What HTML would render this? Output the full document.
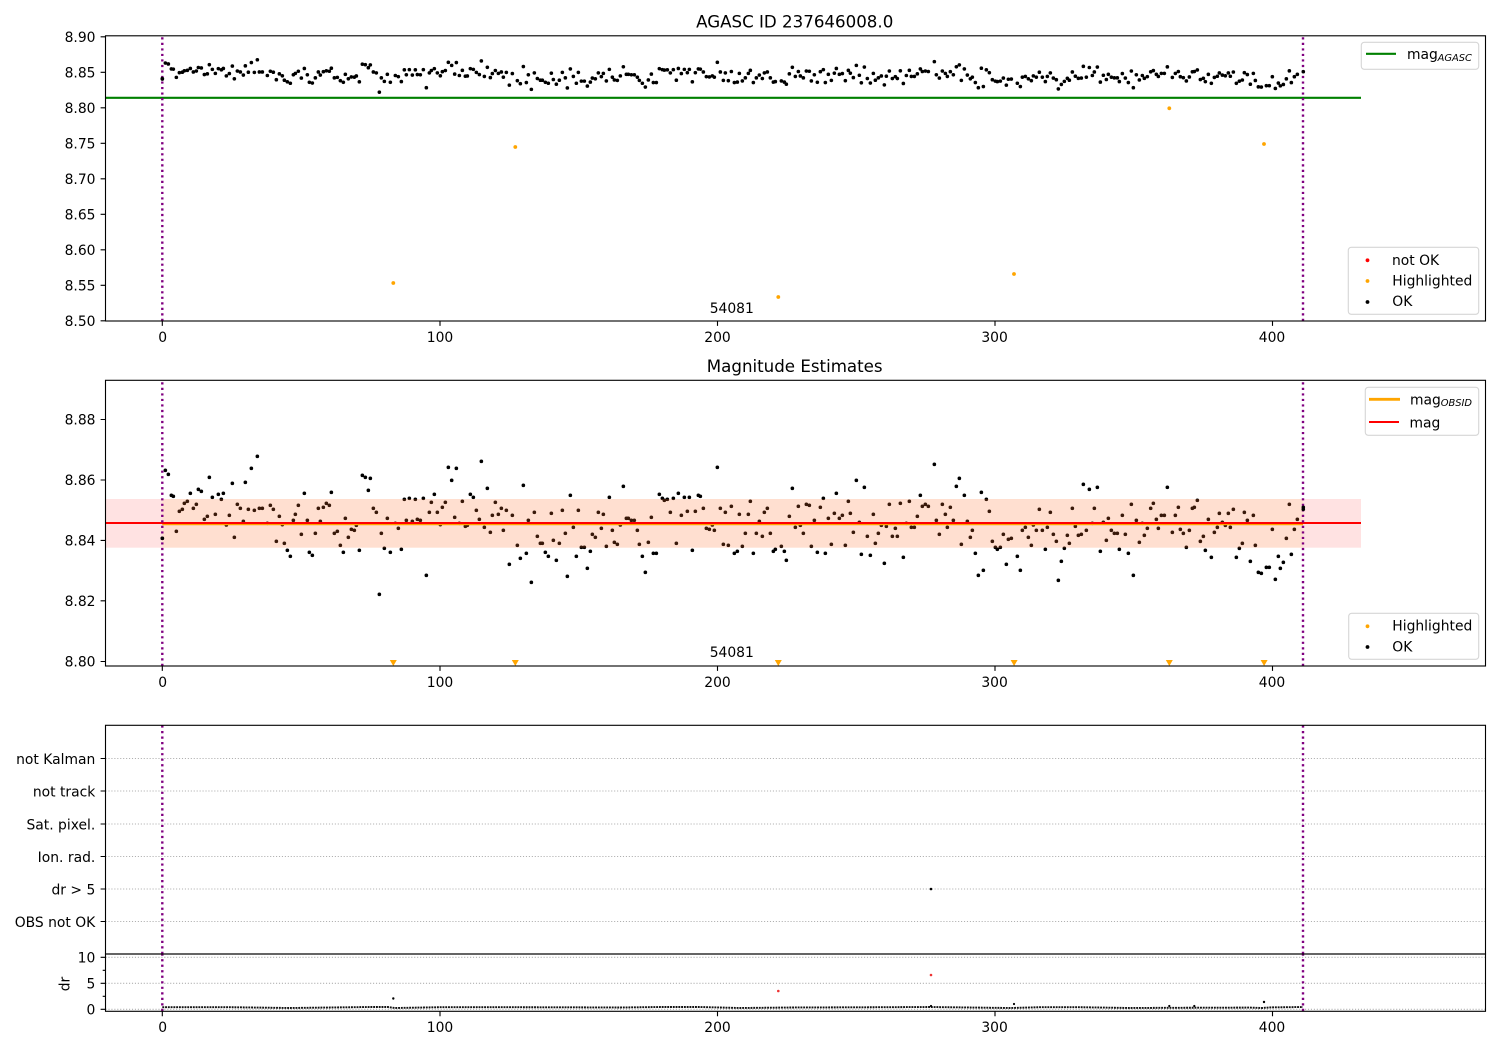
<!DOCTYPE html>
<html><head><meta charset="utf-8"><title>AGASC ID 237646008.0</title>
<style>
html,body{margin:0;padding:0;background:#fff}
svg{display:block}
text{font-family:"DejaVu Sans",sans-serif;font-size:13.89px;fill:#000}
.d{fill:none;stroke:#000;stroke-width:3.6;stroke-linecap:round;vector-effect:non-scaling-stroke}
.ax{fill:none;stroke:#000;stroke-width:1.11}
.tk{stroke:#000;stroke-width:1.11;fill:none}
.g{stroke:#b0b0b0;stroke-width:1.11;stroke-dasharray:1.11 1.83;fill:none}
.p{stroke:#800080;stroke-width:2.4;stroke-dasharray:2.2 3.32;fill:none}
.l{fill:#fff;fill-opacity:.8;stroke:#d6d6d6;stroke-width:1.11}
.r{text-anchor:end}.m{text-anchor:middle}
.s{font-size:9.9px;font-style:italic}
</style></head><body>
<svg xmlns="http://www.w3.org/2000/svg" width="1500" height="1050" viewBox="0 0 1500 1050">
<rect width="1500" height="1050" fill="#fff"/>
<defs>
<path id="p5" class="d" d="M187 295h.1M196 91h.1M205 103h.1M214 166h.1M220 169h.1M229 274h.1M238 214h.1M247 208h.1M253 190h.1M262 184h.1M271 160h.1M280 205h.1M289 193h.1M295 148h.1M304 154h.1M313 238h.1M322 229h.1M328 112h.1M337 172h.1M346 223h.1M355 163h.1M364 178h.1M370 160h.1M379 255h.1M388 226h.1M397 130h.1M403 292h.1M412 193h.1M421 205h.1M430 244h.1M436 127h.1M445 208h.1M454 85h.1M463 211h.1M472 49h.1M478 205h.1M487 205h.1M502 250h.1M511 196h.1M520 208h.1M529 304h.1M538 229h.1M547 254h.1M553 310h.1M562 331h.1M571 349h.1M580 241h.1M586 223h.1M595 196h.1M604 283h.1M613 160h.1M622 241h.1M628 337h.1M637 346h.1M646 280h.1M655 205h.1M661 244h.1M670 202h.1M679 190h.1M688 196h.1M694 157h.1M703 280h.1M712 274h.1M721 316h.1M730 337h.1M736 235h.1M745 292h.1M754 268h.1M763 271h.1M769 256h.1M778 331h.1M787 106h.1M796 112h.1M805 151h.1M811 115h.1M820 205h.1M829 217h.1M838 463h.1M844 280h.1M853 325h.1M862 235h.1M871 337h.1M886 250h.1M895 265h.1M904 328h.1M913 178h.1M919 241h.1M928 175h.1M937 244h.1M946 178h.1M952 238h.1M961 241h.1M970 175h.1M979 406h.1M988 217h.1M994 187h.1M1003 163h.1M1012 217h.1M1021 254h.1M1027 202h.1M1036 187h.1M1045 82h.1"/>
<path id="p6" class="d" d="M5 121h.1M14 232h.1M19 85h.1M28 250h.1M37 184h.1M46 259h.1M52 256h.1M61 163h.1M70 172h.1M79 211h.1M88 238h.1M94 64h.1M103 262h.1M112 145h.1M121 277h.1M127 226h.1M136 187h.1M145 223h.1M154 205h.1M160 271h.1M169 211h.1M178 373h.1M187 226h.1M202 316h.1M211 355h.1M220 136h.1M229 340h.1M235 241h.1M244 427h.1M253 217h.1M262 289h.1M271 310h.1M277 310h.1M286 337h.1M295 349h.1M304 220h.1M310 301h.1M319 361h.1M328 310h.1M337 211h.1M346 280h.1M352 409h.1M361 166h.1M370 262h.1M379 349h.1M385 211h.1M394 322h.1M403 322h.1M412 385h.1M421 334h.1M427 283h.1M436 292h.1M445 217h.1M454 265h.1M460 223h.1M469 319h.1M478 172h.1M487 271h.1M493 307h.1M502 313h.1M511 255h.1M520 139h.1M529 235h.1M535 235h.1M544 241h.1M553 241h.1M562 271h.1M568 313h.1M577 349h.1M586 397h.1M595 307h.1M604 232h.1M610 340h.1M619 340h.1M628 163h.1M637 175h.1M643 181h.1M652 178h.1M661 217h.1M670 175h.1M679 310h.1M685 160h.1M694 226h.1M703 172h.1M712 214h.1M718 172h.1M727 331h.1M736 214h.1M745 166h.1M751 169h.1M760 205h.1M769 265h.1M778 268h.1M787 255h.1M793 271h.1M802 82h.1M811 205h.1M820 313h.1M826 217h.1M835 316h.1M844 199h.1M853 340h.1M862 334h.1M868 223h.1M877 319h.1M886 280h.1M895 223h.1M901 184h.1M910 340h.1M919 280h.1M928 244h.1M937 289h.1M943 217h.1M952 205h.1M961 280h.1M970 334h.1M976 328h.1M994 319h.1M1003 334h.1M1009 361h.1M1018 229h.1M1027 145h.1M1036 262h.1M1045 199h.1"/>
<path id="p7" class="d" d="M1 256h.1M10 280h.1M19 193h.1M28 196h.1M34 319h.1M43 241h.1M52 337h.1M61 202h.1M70 175h.1M76 340h.1M85 235h.1M94 313h.1M103 220h.1M109 160h.1M118 235h.1M127 226h.1M136 316h.1M145 184h.1M151 220h.1M160 277h.1M169 121h.1M178 247h.1M184 343h.1M193 142h.1M202 289h.1M211 346h.1M220 223h.1M226 310h.1M235 280h.1M244 256h.1M253 370h.1M259 259h.1M268 193h.1M277 289h.1M286 265h.1M292 289h.1M301 190h.1M310 352h.1M319 250h.1M328 184h.1M334 262h.1M343 262h.1M352 229h.1M361 166h.1M367 199h.1M376 193h.1M385 199h.1M403 73h.1M409 241h.1M418 283h.1M427 193h.1M436 223h.1M442 262h.1M451 202h.1M460 241h.1M469 139h.1M478 115h.1M484 313h.1M493 166h.1M502 244h.1M511 292h.1M517 271h.1M526 340h.1M535 406h.1M544 157h.1M550 391h.1M559 178h.1M568 214h.1M577 304h.1M586 322h.1M592 328h.1M601 322h.1M610 283h.1M619 373h.1M625 298h.1M634 295h.1M652 349h.1M661 391h.1M667 271h.1M676 262h.1M685 292h.1M694 316h.1M700 255h.1M709 271h.1M718 208h.1M727 271h.1M736 328h.1M742 262h.1M751 217h.1M760 283h.1M769 304h.1M775 421h.1M784 364h.1M793 325h.1M802 286h.1M808 310h.1M817 205h.1M826 259h.1M835 286h.1M844 283h.1M850 133h.1M859 271h.1M868 148h.1M877 250h.1M883 205h.1M892 142h.1M901 334h.1M910 247h.1M919 301h.1M925 235h.1M934 271h.1M943 280h.1M952 280h.1M958 328h.1M967 226h.1M976 283h.1M985 340h.1M994 193h.1M1000 406h.1M1009 241h.1M1018 307h.1M1027 250h.1M1033 286h.1M1042 265h.1"/>
<path id="p8" class="d" d="M2 385h.1M10 370h.1M19 418h.1M25 445h.1M34 406h.1M43 406h.1M52 322h.1M67 457h.1M76 406h.1M85 382h.1M91 448h.1M100 460h.1M109 502h.1M118 451h.1M127 385h.1M133 382h.1M142 361h.1M151 484h.1M160 469h.1M166 511h.1M175 418h.1M184 532h.1M193 457h.1M202 442h.1M208 400h.1M217 427h.1M226 436h.1M235 400h.1M241 442h.1M250 388h.1M259 532h.1M268 505h.1M277 490h.1M283 397h.1M292 421h.1M301 544h.1M310 406h.1M316 496h.1M325 577h.1M334 580h.1M349 562h.1M358 562h.1M367 448h.1M376 598h.1M385 529h.1M391 565h.1M400 547h.1M409 475h.1M418 373h.1M424 523h.1M433 448h.1M442 418h.1"/>
</defs>

<!-- Axes 1 -->
<use href="#p5" transform="matrix(.33333 0 0 .07837 100 55.9)"/>
<use href="#p6" transform="matrix(.33333 0 0 .07837 450 55.9)"/>
<use href="#p7" transform="matrix(.33333 0 0 .07837 800 55.9)"/>
<use href="#p8" transform="matrix(.33333 0 0 .07837 1150 41.6)"/>
<g fill="#ffa500"><circle cx="393.3" cy="283" r="1.9"/><circle cx="515.3" cy="147" r="1.9"/><circle cx="778.3" cy="297" r="1.9"/><circle cx="1014" cy="274" r="1.9"/><circle cx="1169.3" cy="108.3" r="1.9"/><circle cx="1264" cy="144" r="1.9"/></g>
<path d="M105.5 97.8H1361" stroke="#008000" stroke-width="2.08" fill="none"/>
<path class="p" d="M162.3 321V36"/><path class="p" d="M1303 321V36"/>
<circle cx="162.3" cy="78.5" r="1.8"/><circle cx="1303.3" cy="71.7" r="1.8"/>
<rect class="ax" x="105.5" y="35.8" width="1380" height="285.2"/>
<path class="tk" d="M100.6 36.8h4.9M100.6 72.3h4.9M100.6 107.8h4.9M100.6 143.3h4.9M100.6 178.8h4.9M100.6 214.3h4.9M100.6 249.8h4.9M100.6 285.3h4.9M100.6 320.8h4.9M162.3 321v4.9M440 321v4.9M717.5 321v4.9M995 321v4.9M1272.5 321v4.9"/>
<text class="r" x="95.5" y="42">8.90</text><text class="r" x="95.5" y="77.5">8.85</text><text class="r" x="95.5" y="113">8.80</text><text class="r" x="95.5" y="148.5">8.75</text><text class="r" x="95.5" y="184">8.70</text><text class="r" x="95.5" y="219.5">8.65</text><text class="r" x="95.5" y="255">8.60</text><text class="r" x="95.5" y="290.5">8.55</text><text class="r" x="95.5" y="326">8.50</text>
<text class="m" x="162.7" y="342">0</text><text class="m" x="440" y="342">100</text><text class="m" x="717.5" y="342">200</text><text class="m" x="994.6" y="342">300</text><text class="m" x="1272" y="342">400</text>
<text x="709.7" y="313">54081</text>
<text class="m" x="794.7" y="27.7" style="font-size:16.67px">AGASC ID 237646008.0</text>
<rect class="l" x="1361.3" y="42.3" width="117.4" height="27" rx="3"/>
<path d="M1366 53.8h30" stroke="#008000" stroke-width="2.08"/>
<text x="1407" y="59">mag</text><text class="s" x="1437.6" y="61">AGASC</text>
<rect class="l" x="1348.3" y="247.3" width="130.4" height="67" rx="3"/>
<circle cx="1367.5" cy="260.3" r="1.9" fill="#f00"/><circle cx="1367.5" cy="281" r="1.9" fill="#ffa500"/><circle cx="1367.5" cy="302" r="1.9"/>
<text x="1392" y="265">not OK</text><text x="1392.3" y="285.5">Highlighted</text><text x="1392.3" y="306.2">OK</text>

<!-- Axes 2 -->
<use href="#p5" transform="matrix(.33333 0 0 .33333 100 440)"/>
<use href="#p6" transform="matrix(.33333 0 0 .33333 450 440)"/>
<use href="#p7" transform="matrix(.33333 0 0 .33333 800 440)"/>
<use href="#p8" transform="matrix(.33333 0 0 .33333 1150 380)"/>
<rect x="105.5" y="499" width="56.8" height="48.7" fill="rgba(255,0,0,.115)"/>
<rect x="162.3" y="499" width="1141" height="48.7" fill="rgba(255,110,45,.225)"/>
<rect x="1303.3" y="499" width="57.7" height="48.7" fill="rgba(255,0,0,.115)"/>
<path d="M162.3 524.2H1303" stroke="#ffa500" stroke-width="2.08"/>
<path d="M105.5 523H1361" stroke="#f00" stroke-width="2.08"/>
<path class="p" d="M162.3 666V380"/><path class="p" d="M1303 666V380"/>
<circle cx="162.3" cy="538.3" r="1.8"/><circle cx="1303.3" cy="507.3" r="1.8"/><circle cx="1303.3" cy="509.3" r="1.8"/>
<g fill="#ffa500"><path d="M389.8 660h7l-3.5 6zM511.8 660h7l-3.5 6zM774.8 660h7l-3.5 6zM1010.6 660h7l-3.5 6zM1165.8 660h7l-3.5 6zM1260.6 660h7l-3.5 6z"/></g>
<rect class="ax" x="105.5" y="380.3" width="1380" height="285.7"/>
<path class="tk" d="M100.6 419.5h4.9M100.6 480h4.9M100.6 540.4h4.9M100.6 600.8h4.9M100.6 661.5h4.9M162.3 666v4.9M440 666v4.9M717.5 666v4.9M995 666v4.9M1272.5 666v4.9"/>
<text class="r" x="95.5" y="424.7">8.88</text><text class="r" x="95.5" y="485.2">8.86</text><text class="r" x="95.5" y="545.6">8.84</text><text class="r" x="95.5" y="606">8.82</text><text class="r" x="95.5" y="666.7">8.80</text>
<text class="m" x="162.7" y="687">0</text><text class="m" x="440" y="687">100</text><text class="m" x="717.5" y="687">200</text><text class="m" x="994.6" y="687">300</text><text class="m" x="1272" y="687">400</text>
<text x="709.7" y="657">54081</text>
<text class="m" x="794.7" y="372" style="font-size:16.67px">Magnitude Estimates</text>
<rect class="l" x="1365.3" y="387.3" width="113.4" height="48" rx="3"/>
<path d="M1369 399.3h31" stroke="#ffa500" stroke-width="2.8"/>
<path d="M1369 422h30" stroke="#f00" stroke-width="2.08"/>
<text x="1410" y="404.3">mag</text><text class="s" x="1440.7" y="406">OBSID</text><text x="1409.5" y="427.3">mag</text>
<rect class="l" x="1348.7" y="613.3" width="130" height="46" rx="3"/>
<circle cx="1367.5" cy="626.3" r="1.9" fill="#ffa500"/><circle cx="1367.5" cy="647" r="1.9"/>
<text x="1392.3" y="630.7">Highlighted</text><text x="1392.3" y="651.7">OK</text>

<!-- Axes 3 upper -->
<path class="g" d="M105.5 758.5H1485M105.5 791H1485M105.5 824H1485M105.5 856.5H1485M105.5 889H1485M105.5 921.5H1485"/>
<path class="p" d="M162.3 954V725"/><path class="p" d="M1303 954V725"/>
<circle cx="931" cy="889" r="1.3"/>
<rect class="ax" x="105.5" y="725.3" width="1380" height="228.7"/>
<path class="tk" d="M100.6 758.5h4.9M100.6 791h4.9M100.6 824h4.9M100.6 856.5h4.9M100.6 889h4.9M100.6 921.5h4.9"/>
<text class="r" x="95.3" y="764">not Kalman</text><text class="r" x="95.3" y="796.5">not track</text><text class="r" x="95.3" y="829.5">Sat. pixel.</text><text class="r" x="95.3" y="862">Ion. rad.</text><text class="r" x="95.3" y="894.5">dr &gt; 5</text><text class="r" x="95.3" y="927">OBS not OK</text>

<!-- Axes 3 lower -->
<path class="g" d="M105.5 957.3H1485M105.5 983.3H1485M105.5 1009.3H1485"/>
<path class="p" d="M162.3 1011V954"/><path class="p" d="M1303 1011V954"/>
<polyline fill="none" stroke="#111" stroke-width="1.9" stroke-dasharray="1.9 .875" points="162.3,1007.2 230,1007.2 290,1008 330,1007.5 370,1007 388,1007 395,1008 440,1007.2 500,1007.2 560,1007.3 620,1007.5 660,1007 700,1007 740,1008 790,1007.5 860,1007.3 930,1007 970,1007.5 1010,1008 1040,1007.2 1080,1007.2 1130,1008 1170,1007.8 1250,1007.6 1262,1008 1270,1007.4 1303,1007"/>
<circle cx="393.3" cy="998.5" r="1.2"/><circle cx="1014" cy="1004" r="1.1"/><circle cx="1169.3" cy="1006" r="1.1"/><circle cx="1194.3" cy="1006" r="1.1"/><circle cx="1264" cy="1002" r="1.2"/><circle cx="931" cy="1006" r="1.1"/>
<circle cx="778.3" cy="991" r="1.3" fill="#e33"/><circle cx="931" cy="975" r="1.3" fill="#e33"/>
<rect class="ax" x="105.5" y="954" width="1380" height="57.3"/>
<path class="tk" d="M100.6 957.3h4.9M100.6 983.3h4.9M100.6 1009.3h4.9M102.7 970.3h2.8M102.7 996.3h2.8M162.3 1011.3v4.9M440 1011.3v4.9M717.5 1011.3v4.9M995 1011.3v4.9M1272.5 1011.3v4.9"/>
<text class="r" x="95.3" y="962.5">10</text><text class="r" x="95.3" y="988.5">5</text><text class="r" x="95.3" y="1014.5">0</text>
<text class="m" transform="translate(69.5 984) rotate(-90)">dr</text>
<text class="m" x="162.7" y="1032">0</text><text class="m" x="440" y="1032">100</text><text class="m" x="717.5" y="1032">200</text><text class="m" x="994.6" y="1032">300</text><text class="m" x="1272" y="1032">400</text>
</svg>
</body></html>
